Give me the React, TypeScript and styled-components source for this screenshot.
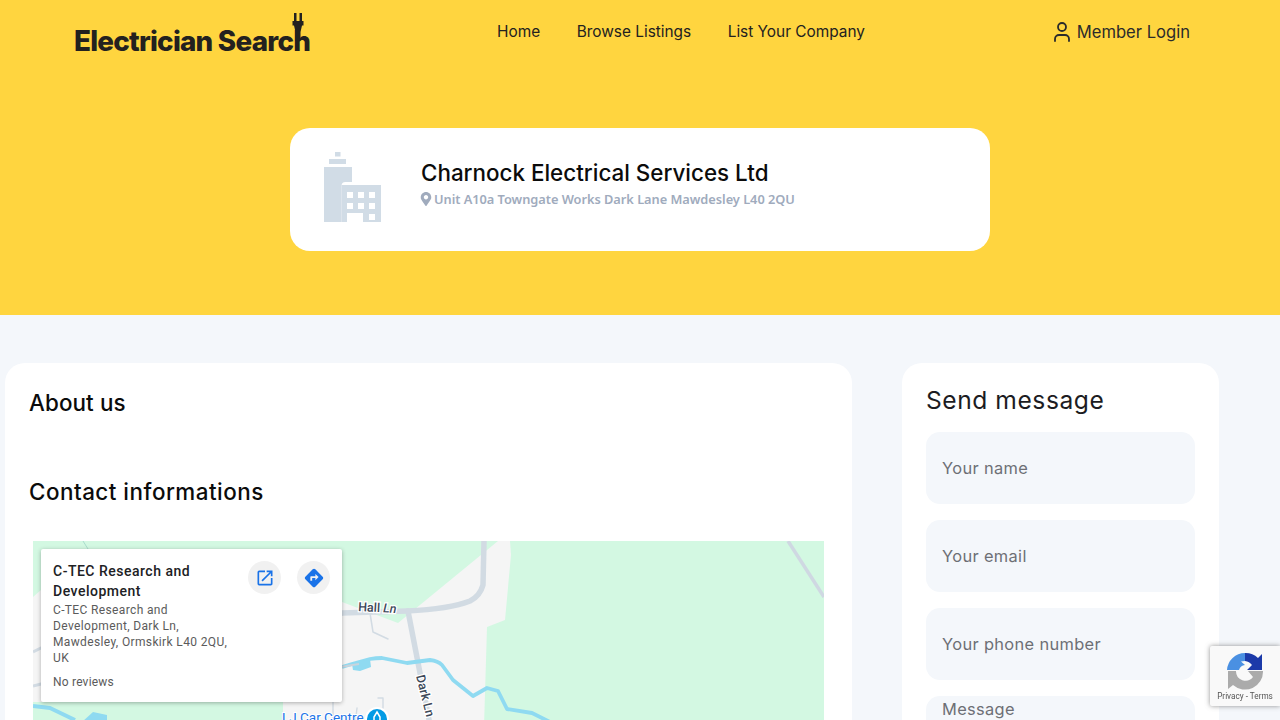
import React from 'react';
import styled, { createGlobalStyle } from 'styled-components';
import { User } from 'lucide-react';
import { FaMapMarkerAlt } from 'react-icons/fa';
import { MdOpenInNew, MdDirections } from 'react-icons/md';

const Global = createGlobalStyle`
  html, body { margin: 0; padding: 0; height: 720px; overflow: hidden; background: #f4f7fb; }
  * { box-sizing: border-box; }
  body { font-family: Inter, "Liberation Sans", sans-serif; }
`;

const Banner = styled.section`
  background: #ffd53f;
  height: 315px;
  display: flex;
  flex-direction: column;
`;
const TopBar = styled.header`
  height: 62px;
  display: flex;
  align-items: center;
  padding: 0 90px 0 74px;
`;
const Logo = styled.a`
  position: relative;
  display: block;
  width: 236px;
  font-size: 27.8px;
  font-weight: 800;
  letter-spacing: -0.75px;
  line-height: 32px;
  color: #23211f;
  margin-top: 20px;
  white-space: nowrap;
`;
const Plug = styled.svg`
  position: absolute;
  left: 218px;
  top: -12px;
`;
const Nav = styled.nav`
  display: flex;
  gap: 36.5px;
  margin-left: 187px;
  font-size: 15.4px;
  color: #23211f;
  margin-top: 1px;
`;
const NavLink = styled.a`
  white-space: nowrap;
`;
const Login = styled.a`
  margin-left: auto;
  display: flex;
  align-items: center;
  gap: 3px;
  font-size: 16.6px;
  color: #2b2b2b;
  margin-top: 1px;
  white-space: nowrap;
`;
const HeroCard = styled.div`
  width: 700px;
  height: 123px;
  margin: 66px auto 0;
  background: #fff;
  border-radius: 20px;
  display: flex;
  align-items: center;
  gap: 40px;
  padding-left: 34px;
`;
const BuildingArt = styled.svg`
  margin-top: -6px;
  flex: none;
`;
const HeroText = styled.div`
  display: flex;
  flex-direction: column;
  margin-top: -14px;
`;
const CompanyName = styled.h1`
  margin: 0;
  font-size: 22.4px;
  font-weight: 500;
  line-height: 30px;
  color: #0b0b0b;
  white-space: nowrap;
`;
const Address = styled.div`
  display: flex;
  align-items: center;
  gap: 1px;
  margin-top: 2px;
  margin-left: -2px;
  font-family: "Noto Sans", sans-serif;
  font-size: 12.8px;
  font-weight: 600;
  line-height: 18px;
  letter-spacing: -0.03px;
  color: #a0abbd;
  white-space: nowrap;
`;
const Main = styled.main`
  display: grid;
  grid-template-columns: 847px 317px;
  column-gap: 50px;
  padding: 48px 0 0 5px;
  align-items: start;
`;
const Card = styled.div`
  background: #fff;
  border-radius: 20px;
  padding: 24px;
  height: 500px;
`;
const SectionTitle = styled.h2<{ $gap: number; $tracking: number }>`
  margin: 0 0 ${p => p.$gap}px;
  font-size: 22.4px;
  font-weight: 500;
  line-height: 32px;
  letter-spacing: ${p => p.$tracking}px;
  color: #0b0b0b;
`;
const MapFrame = styled.div`
  position: relative;
  width: 791px;
  height: 300px;
  margin-left: 4px;
  background: #d3f8e2;
  overflow: hidden;
`;
const MapArt = styled.svg`
  display: block;
`;
const InfoCard = styled.div`
  position: absolute;
  left: 8px;
  top: 8px;
  width: 301px;
  height: 153px;
  background: #fff;
  border-radius: 2px;
  box-shadow: 0 1px 4px rgba(0, 0, 0, 0.3);
  padding: 12px;
  display: flex;
  font-family: Roboto, sans-serif;
`;
const InfoText = styled.div`
  width: 180px;
`;
const PlaceName = styled.div`
  font-size: 14px;
  font-weight: 500;
  line-height: 20px;
  letter-spacing: 0.5px;
  color: #202124;
`;
const PlaceAddress = styled.div`
  font-size: 12px;
  line-height: 16px;
  letter-spacing: 0.36px;
  color: #5b5b5b;
  width: 180px;
  margin-top: 1px;
`;
const Reviews = styled.div`
  font-size: 12px;
  line-height: 16px;
  letter-spacing: 0.2px;
  color: #5b5b5b;
  margin-top: 8px;
`;
const Actions = styled.div`
  display: flex;
  gap: 16px;
  margin-left: 15px;
  align-items: flex-start;
`;
const ActionButton = styled.span`
  width: 33px;
  height: 33px;
  border-radius: 50%;
  background: #f1f1f1;
  color: #1a73e8;
  display: flex;
  align-items: center;
  justify-content: center;
`;
const FormCard = styled(Card)`
  display: flex;
  flex-direction: column;
  gap: 16px;
  padding-top: 22px;
`;
const FormTitle = styled.h3`
  margin: 0;
  font-size: 24.6px;
  font-weight: 400;
  line-height: 31px;
  letter-spacing: 0.55px;
  color: #1c1c22;
`;
const Field = styled.input`
  height: 72px;
  width: 100%;
  flex: none;
  border: 0;
  outline: 0;
  border-radius: 14px;
  background: #f4f7fb;
  padding: 0 16px;
  font: 400 16.4px Inter, sans-serif;
  letter-spacing: 0.35px;
  &::placeholder { color: #6d6f75; opacity: 1; }
`;
const MessageField = styled.textarea`
  height: 120px;
  width: 100%;
  flex: none;
  border: 0;
  outline: 0;
  resize: none;
  border-radius: 14px;
  background: #f4f7fb;
  padding: 3px 16px;
  font: 400 16.4px/20px Inter, sans-serif;
  letter-spacing: 0.35px;
  &::placeholder { color: #6d6f75; opacity: 1; }
`;
const Recaptcha = styled.div`
  position: fixed;
  left: 1210px;
  top: 646px;
  width: 70px;
  height: 60px;
  background: #f9f9f9;
  box-shadow: 0 0 5px rgba(110, 110, 110, 0.75);
  border-radius: 2px 0 0 2px;
  display: flex;
  flex-direction: column;
  align-items: center;
  padding-top: 6px;
  font-family: Roboto, sans-serif;
`;
const RecaptchaTerms = styled.div`
  font-size: 8.2px;
  line-height: 10px;
  color: #555;
  margin-top: 1px;
  white-space: nowrap;
`;

const MapDrawing = () => (
  <MapArt width="791" height="300" viewBox="33 541 791 300">
    <polygon fill="#f5f5f5" points="33,597 41,590 342,602 398,623 498,541 510,541 511,555 505,620 487,627 483,760 283,760 283,702 33,702" />
    <g fill="none" stroke="#d2dbe3" strokeLinejoin="round" strokeLinecap="round">
      <path strokeWidth="5.500" d="M484 541 L483 585 Q480 596 470 601 Q450 609 407 611 L342 613 L300 625" />
      <path strokeWidth="5.500" d="M408 611 L420 673 L431 730" />
      <path strokeWidth="1.600" d="M370 613 L373 632 L388 639" />
      <path strokeWidth="3" strokeLinecap="butt" d="M33 652 L45 646 M33 686 L45 683" />
      <path strokeWidth="1.400" d="M333 702 V725 M357 708 L355 725 M378 698 H383 V708" />
      <path strokeWidth="3.500" strokeLinecap="butt" stroke="#cfd8e2" d="M788 541 L824 597" />
    </g>
    <path d="M83 541 L88 549" stroke="#a9dccd" strokeWidth="1" fill="none" />
    <g fill="none" stroke="#8fdaf1" strokeWidth="3.800" strokeLinejoin="round">
      <path d="M342 667 L352 664 L370 659 Q376 658 382 658 L407 663 L430 660 Q438 661 442 665 L453 680 L473 696 L487 688 L498 691 L507 709 L532 713 L552 723" />
      <path strokeWidth="4" d="M33 706 L50 708 L75 720" />
    </g>
    <polygon fill="#8fdaf1" points="352,664 370,659 371,667 360,671 353,670" />
    <polygon fill="#8fdaf1" points="82,722 93,712 107,715 107,725" />
    <path d="M340 667 L359 664" stroke="#c9d4dc" strokeWidth="2" />
    <g fontFamily="Roboto, sans-serif" fontWeight="500" fontSize="12.500" fill="#3c4858" stroke="#fff" strokeWidth="2.500" paintOrder="stroke">
      <text x="358" y="611" transform="rotate(3 358 611)">Hall <tspan fontStyle="italic">Ln</tspan></text>
      <text x="416" y="676" transform="rotate(76 416 676)">Dark Ln</text>
    </g>
    <text x="282" y="722" fontFamily="Roboto, sans-serif" fontSize="13.500" fill="#1a73e8" stroke="#fff" strokeWidth="2" paintOrder="stroke">LJ Car Centre</text>
    <circle cx="377" cy="719" r="12" fill="#fff" />
    <circle cx="377" cy="719" r="10" fill="#039be5" />
    <path d="M377 712 L380 717 V723 H374 V717 Z" fill="none" stroke="#fff" strokeWidth="1.500" />
  </MapArt>
);

const Building = () => (
  <BuildingArt width="57" height="70" viewBox="0 0 57 70">
    <path fill="#d1dce6" d="M11 0h5.500v4.500H11zM5 7h17v5H5zM0 15h28v15h-6.500a4 4 0 0 0-4 4v36H0z" />
    <path fill="#d1dce6" fillRule="evenodd" d="M17.500 33H57v37H39V61H23v9h-5.500z M23 40v6h6v-6z M34 40v6h6v-6z M45 40v6h6v-6z M23 51v6h6v-6z M34 51v6h6v-6z M45 51v6h6v-6z M45 62v6h6v-6z" />
  </BuildingArt>
);

const PlugIcon = () => (
  <Plug width="12" height="28" viewBox="0 0 12 28">
    <path fill="#23211f" d="M2 0h2.500v8H2zM7.500 0H10v8H7.500zM0.500 8H11.500V12.500H10L8.500 19V28H3.500V19L2 12.500H0.500z" />
  </Plug>
);

const RecaptchaLogo = () => (
  <svg width="38" height="38" viewBox="0 0 38 38">
    <path fill="#4a90e2" d="M1 18 A18 18 0 0 1 19 1 V9 L15 9.500 L19 13 A7 7 0 0 0 13 18 Z" />
    <path fill="#1c3aa9" d="M19 1 A18 18 0 0 1 32 6 L36 2 V18 H21 L26 13 A10 10 0 0 0 19 9 Z" />
    <path fill="#ababab" d="M1 19 H10 A9.500 9.500 0 0 0 27 25 L22 19 H37 A18 18 0 0 1 7 33 L2 37 V19 Z" />
  </svg>
);

export default function App() {
  return (
    <>
      <Global />
      <Banner>
        <TopBar>
          <Logo>
            Electrician Search
            <PlugIcon />
          </Logo>
          <Nav>
            <NavLink>Home</NavLink>
            <NavLink>Browse Listings</NavLink>
            <NavLink>List Your Company</NavLink>
          </Nav>
          <Login>
            <User size={24} strokeWidth={1.8} />
            Member Login
          </Login>
        </TopBar>
        <HeroCard>
          <Building />
          <HeroText>
            <CompanyName>Charnock Electrical Services Ltd</CompanyName>
            <Address>
              <FaMapMarkerAlt size={14} />
              Unit A10a Towngate Works Dark Lane Mawdesley L40 2QU
            </Address>
          </HeroText>
        </HeroCard>
      </Banner>
      <Main>
        <Card>
          <SectionTitle $gap={57} $tracking={0.1}>About us</SectionTitle>
          <SectionTitle $gap={33} $tracking={0.5}>Contact informations</SectionTitle>
          <MapFrame>
            <MapDrawing />
            <InfoCard>
              <InfoText>
                <PlaceName>C-TEC Research and Development</PlaceName>
                <PlaceAddress>C-TEC Research and Development, Dark Ln, Mawdesley, Ormskirk L40 2QU, UK</PlaceAddress>
                <Reviews>No reviews</Reviews>
              </InfoText>
              <Actions>
                <ActionButton><MdOpenInNew size={20} /></ActionButton>
                <ActionButton><MdDirections size={22} /></ActionButton>
              </Actions>
            </InfoCard>
          </MapFrame>
        </Card>
        <FormCard>
          <FormTitle>Send message</FormTitle>
          <Field placeholder="Your name" />
          <Field placeholder="Your email" />
          <Field placeholder="Your phone number" />
          <MessageField placeholder="Message" />
        </FormCard>
      </Main>
      <Recaptcha>
        <RecaptchaLogo />
        <RecaptchaTerms>Privacy - Terms</RecaptchaTerms>
      </Recaptcha>
    </>
  );
}
